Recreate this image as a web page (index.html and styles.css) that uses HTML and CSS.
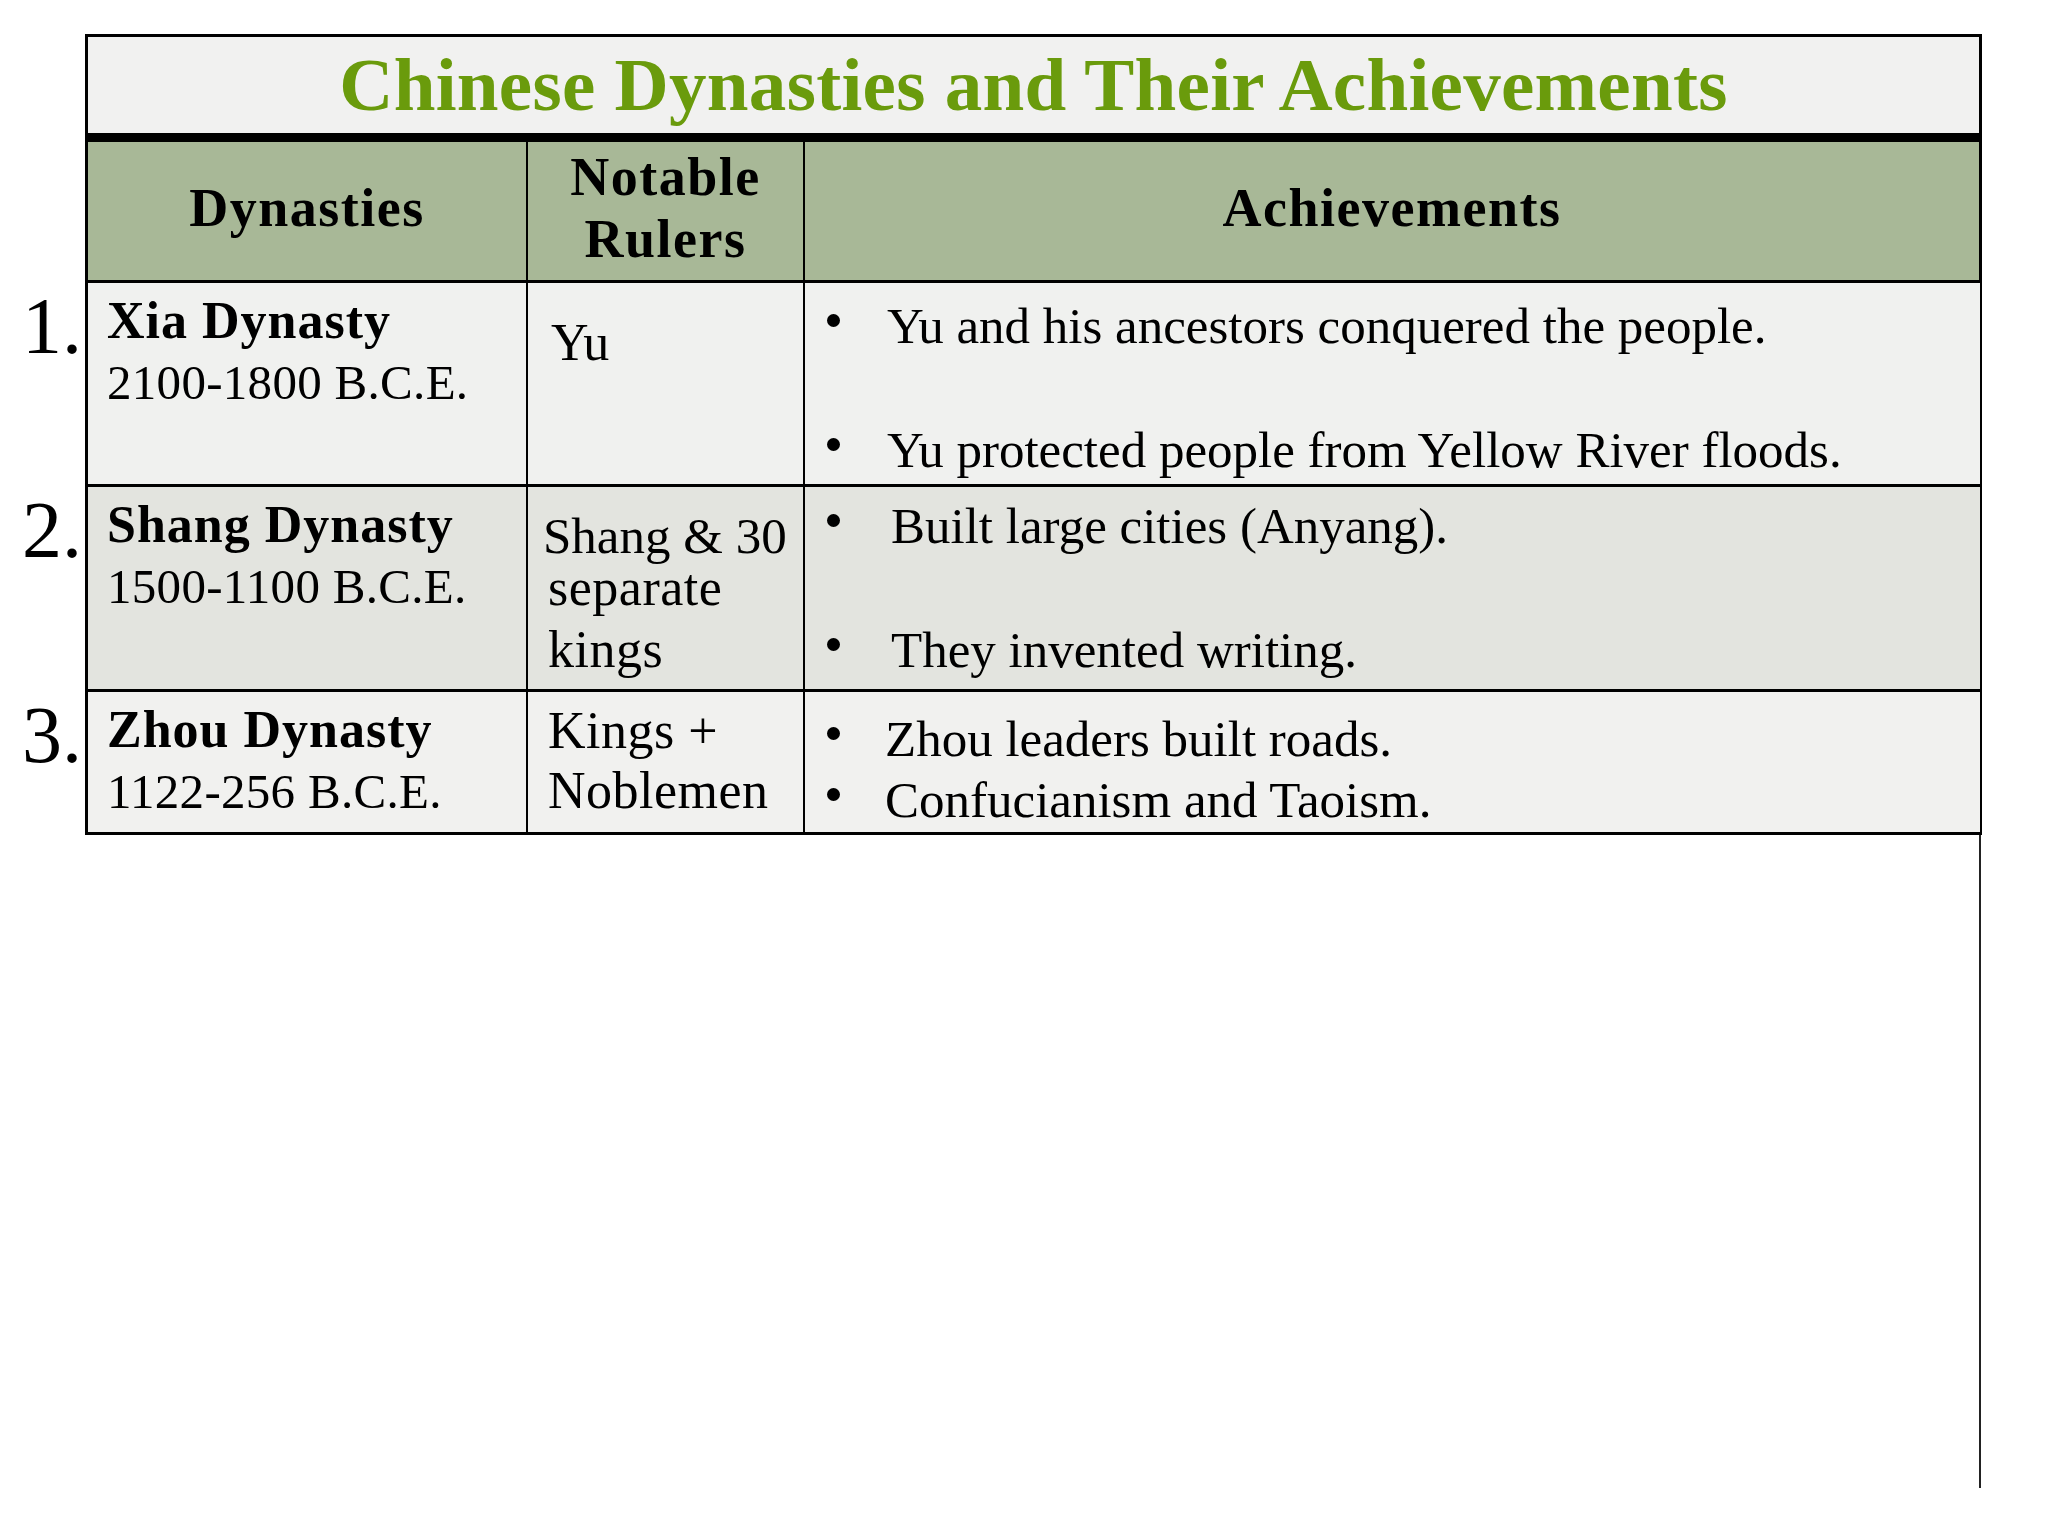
FILE: index.html
```html
<!DOCTYPE html>
<html lang="en">
<head>
<meta charset="utf-8">
<title>Chinese Dynasties and Their Achievements</title>
<link rel="stylesheet" href="styles.css">
</head>
<body>
<main class="page">
  <div class="sheet">
    <div class="num-blank"></div>
    <h1 class="title">Chinese Dynasties and Their Achievements</h1>

    <div class="num-blank"></div>
    <div class="hd hd-first">Dynasties</div>
    <div class="hd">Notable<br>Rulers</div>
    <div class="hd hd-last">Achievements</div>

    <div class="num">1.</div>
    <div class="cell dyn row1">
      <div class="dyn-name">Xia Dynasty</div>
      <div class="dyn-date">2100-1800 B.C.E.</div>
    </div>
    <div class="cell rul rul-1 row1">
      <div class="rl">Yu</div>
    </div>
    <div class="cell ach ach-1 row1">
      <p class="item"><span class="dot"></span>Yu and his ancestors conquered the people.</p>
      <p class="item"><span class="dot"></span>Yu protected people from Yellow River floods.</p>
    </div>

    <div class="num">2.</div>
    <div class="cell dyn row2">
      <div class="dyn-name">Shang Dynasty</div>
      <div class="dyn-date">1500-1100 B.C.E.</div>
    </div>
    <div class="cell rul rul-2 row2">
      <div class="rl rl-first">Shang &amp; 30</div>
      <div class="rl rl-rest">separate<br>kings</div>
    </div>
    <div class="cell ach ach-2 row2">
      <p class="item"><span class="dot"></span>Built large cities (Anyang).</p>
      <p class="item"><span class="dot"></span>They invented writing.</p>
    </div>

    <div class="num">3.</div>
    <div class="cell dyn row3">
      <div class="dyn-name">Zhou Dynasty</div>
      <div class="dyn-date">1122-256 B.C.E.</div>
    </div>
    <div class="cell rul rul-3 row3">
      <div class="rl">Kings +<br>Noblemen</div>
    </div>
    <div class="cell ach ach-3 row3">
      <p class="item"><span class="dot"></span>Zhou leaders built roads.</p>
      <p class="item"><span class="dot"></span>Confucianism and Taoism.</p>
    </div>
  </div>
  <div class="tail"></div>
</main>
</body>
</html>
```

FILE: styles.css
```css
* { box-sizing: border-box; }

body {
  margin: 0;
  background: #ffffff;
  font-family: "Liberation Serif", "Times New Roman", serif;
  color: #000000;
}

.page {
  padding-top: 34px;
}

.sheet {
  display: grid;
  grid-template-columns: 85px 443px 277px 1177px;
  grid-template-rows: 108px 141px 204px 205px 143px;
}

.title {
  grid-column: 2 / 5;
  margin: 0;
  border: 3px solid #000;
  border-bottom: 9px solid #000;
  background: #f1f1f0;
  color: #6a9b0c;
  font-size: 75px;
  line-height: 75px;
  font-weight: bold;
  letter-spacing: 0.3px;
  text-align: center;
  padding-top: 10px;
  white-space: nowrap;
}

.hd {
  background: #a8b897;
  border-right: 2px solid #000;
  border-bottom: 3px solid #000;
  display: flex;
  align-items: center;
  justify-content: center;
  text-align: center;
  font-weight: bold;
  font-size: 54px;
  line-height: 62px;
  letter-spacing: 1.5px;
  padding-bottom: 6px;
}

.hd-first { border-left: 3px solid #000; }
.hd-last { border-right-width: 3px; }

.cell {
  border-right: 2px solid #000;
  border-bottom: 3px solid #000;
}

.row1 { background: #f0f1ef; }
.row2 { background: #e3e4df; }
.row3 { background: #f1f1ef; }

.num {
  font-size: 80px;
  line-height: 80px;
  text-align: right;
  padding-right: 3px;
  padding-top: 3px;
}

.dyn {
  border-left: 3px solid #000;
  padding: 7px 0 0 19px;
}

.dyn-name {
  font-weight: bold;
  font-size: 52px;
  line-height: 62px;
  letter-spacing: 1px;
  white-space: nowrap;
}

.dyn-date {
  font-size: 49px;
  line-height: 62px;
  letter-spacing: 0.3px;
  white-space: nowrap;
}

.rul {
  padding-left: 20px;
  font-size: 52px;
  line-height: 60px;
  letter-spacing: 0.5px;
  white-space: nowrap;
}

.rul-1 { padding-top: 30px; padding-left: 23px; }
.rul-2 { padding-top: 28px; }
.rul-2 .rl-first { line-height: 42px; margin-left: -5px; letter-spacing: 0; font-size: 51px; }
.rul-2 .rl-rest { line-height: 62px; }
.rul-3 { padding-top: 9px; }

.ach {
  padding-left: 22px;
  font-size: 51px;
}

.item {
  margin: 0;
  line-height: 62px;
  white-space: nowrap;
}

.item + .item { margin-top: 62px; }

.ach-1 { padding-top: 12px; }
.ach-2 { padding-top: 8px; }
.ach-3 { padding-top: 17px; }
.ach-3 .item { line-height: 61px; }
.ach-3 .item + .item { margin-top: 0; }

.dot {
  display: inline-block;
  width: 13px;
  height: 13px;
  border-radius: 50%;
  background: #000;
  vertical-align: 16px;
  margin-right: 47px;
}

.ach-2 .dot { margin-right: 51px; }
.ach-3 .dot { margin-right: 45px; }

.tail {
  margin-left: 1979px;
  width: 2px;
  height: 653px;
  background: #222;
}
```
